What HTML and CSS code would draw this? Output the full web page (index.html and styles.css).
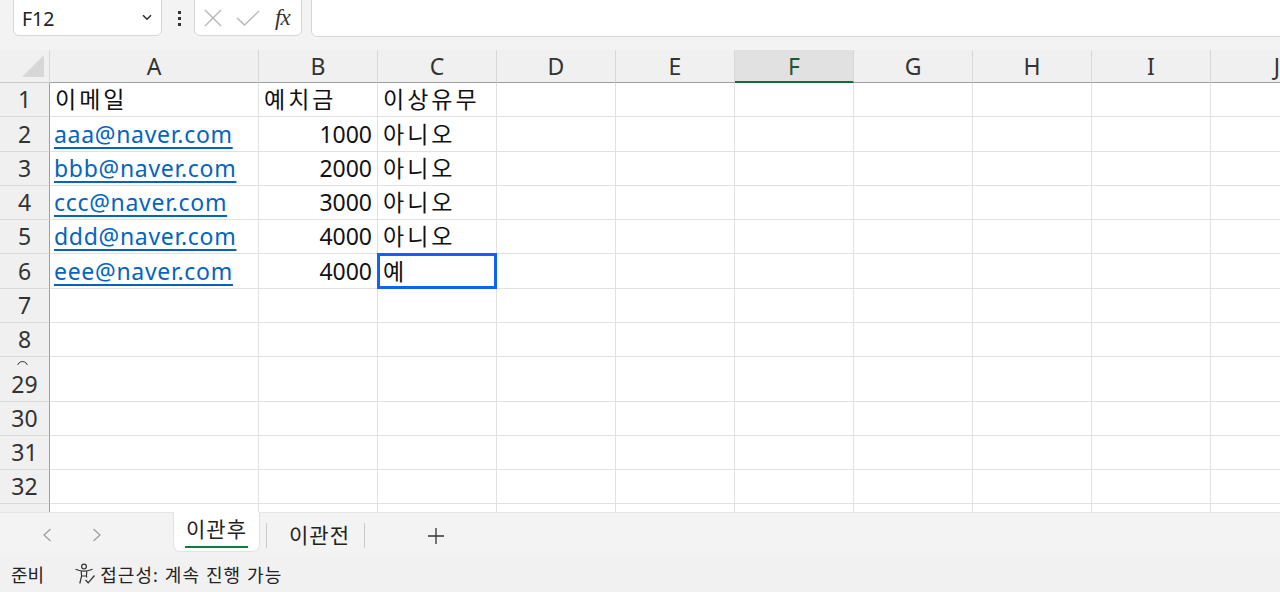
FILE: index.html
```html
<!DOCTYPE html>
<html>
	<head>
		<title>통합 문서 - 이관후</title>
		<meta charset="utf-8">
		<link rel="stylesheet" href="styles.css">
	</head>
	<body>
	<div class="app">

		<div class="toolbar">
			<div class="namebox">
				<span class="name">F12</span>
				<svg class="chev" width="10" height="7" viewBox="0 0 10 7"><path d="M1 1.2 L5 5.2 L9 1.2" fill="none" stroke="#333" stroke-width="1.6"/></svg>
			</div>
			<div class="dots"><i></i><i></i><i></i></div>
			<div class="fxgroup">
				<svg width="18" height="18" viewBox="0 0 18 18"><path d="M1 1 L17 17 M17 1 L1 17" stroke="#b4b4b4" stroke-width="1.3" fill="none"/></svg>
				<svg class="ok" width="24" height="16" viewBox="0 0 24 16"><path d="M1 8 L8.5 15 L23 1" stroke="#b4b4b4" stroke-width="1.3" fill="none"/></svg>
				<span class="fx">fx</span>
			</div>
			<div class="formula"></div>
		</div>

		<div class="sheet">
			<div class="row head">
				<div class="corner"><span class="tri"></span></div>
				<div class="ch wa">A</div><div class="ch">B</div><div class="ch">C</div><div class="ch">D</div><div class="ch">E</div>
				<div class="ch active">F</div><div class="ch">G</div><div class="ch">H</div><div class="ch">I</div><div class="ch right">J</div>
			</div>

			<div class="row">
				<div class="rh">1</div>
				<div class="c wa ko">이메일</div><div class="c ko">예치금</div><div class="c ko">이상유무</div>
				<div class="c"></div><div class="c"></div><div class="c"></div><div class="c"></div><div class="c"></div><div class="c"></div><div class="c"></div>
			</div>
			<div class="row">
				<div class="rh">2</div>
				<div class="c wa"><a class="link">aaa@naver.com</a></div><div class="c num">1000</div><div class="c ko">아니오</div>
				<div class="c"></div><div class="c"></div><div class="c"></div><div class="c"></div><div class="c"></div><div class="c"></div><div class="c"></div>
			</div>
			<div class="row">
				<div class="rh">3</div>
				<div class="c wa"><a class="link">bbb@naver.com</a></div><div class="c num">2000</div><div class="c ko">아니오</div>
				<div class="c"></div><div class="c"></div><div class="c"></div><div class="c"></div><div class="c"></div><div class="c"></div><div class="c"></div>
			</div>
			<div class="row">
				<div class="rh">4</div>
				<div class="c wa"><a class="link">ccc@naver.com</a></div><div class="c num">3000</div><div class="c ko">아니오</div>
				<div class="c"></div><div class="c"></div><div class="c"></div><div class="c"></div><div class="c"></div><div class="c"></div><div class="c"></div>
			</div>
			<div class="row">
				<div class="rh">5</div>
				<div class="c wa"><a class="link">ddd@naver.com</a></div><div class="c num">4000</div><div class="c ko">아니오</div>
				<div class="c"></div><div class="c"></div><div class="c"></div><div class="c"></div><div class="c"></div><div class="c"></div><div class="c"></div>
			</div>
			<div class="row">
				<div class="rh">6</div>
				<div class="c wa"><a class="link">eee@naver.com</a></div><div class="c num">4000</div><div class="c ko sel">예</div>
				<div class="c"></div><div class="c"></div><div class="c"></div><div class="c"></div><div class="c"></div><div class="c"></div><div class="c"></div>
			</div>
			<div class="row">
				<div class="rh">7</div>
				<div class="c wa"></div><div class="c"></div><div class="c"></div>
				<div class="c"></div><div class="c"></div><div class="c"></div><div class="c"></div><div class="c"></div><div class="c"></div><div class="c"></div>
			</div>
			<div class="row">
				<div class="rh">8</div>
				<div class="c wa"></div><div class="c"></div><div class="c"></div>
				<div class="c"></div><div class="c"></div><div class="c"></div><div class="c"></div><div class="c"></div><div class="c"></div><div class="c"></div>
			</div>
			<div class="row tall">
				<div class="rh stack"><span class="peek"><i></i></span><span>29</span></div>
				<div class="c wa"></div><div class="c"></div><div class="c"></div>
				<div class="c"></div><div class="c"></div><div class="c"></div><div class="c"></div><div class="c"></div><div class="c"></div><div class="c"></div>
			</div>
			<div class="row">
				<div class="rh">30</div>
				<div class="c wa"></div><div class="c"></div><div class="c"></div>
				<div class="c"></div><div class="c"></div><div class="c"></div><div class="c"></div><div class="c"></div><div class="c"></div><div class="c"></div>
			</div>
			<div class="row">
				<div class="rh">31</div>
				<div class="c wa"></div><div class="c"></div><div class="c"></div>
				<div class="c"></div><div class="c"></div><div class="c"></div><div class="c"></div><div class="c"></div><div class="c"></div><div class="c"></div>
			</div>
			<div class="row">
				<div class="rh">32</div>
				<div class="c wa"></div><div class="c"></div><div class="c"></div>
				<div class="c"></div><div class="c"></div><div class="c"></div><div class="c"></div><div class="c"></div><div class="c"></div><div class="c"></div>
			</div>
			<div class="row">
				<div class="rh"></div>
				<div class="c wa"></div><div class="c"></div><div class="c"></div>
				<div class="c"></div><div class="c"></div><div class="c"></div><div class="c"></div><div class="c"></div><div class="c"></div><div class="c"></div>
			</div>
		</div>

		<div class="tabs">
			<svg class="nav" width="10" height="14" viewBox="0 0 10 14"><path d="M8.5 1 L2 7 L8.5 13" fill="none" stroke="#9c9c9c" stroke-width="1.2"/></svg>
			<svg class="nav next" width="10" height="14" viewBox="0 0 10 14"><path d="M1.5 1 L8 7 L1.5 13" fill="none" stroke="#9c9c9c" stroke-width="1.2"/></svg>
			<div class="tab current"><span>이관후</span><i class="bar"></i></div>
			<span class="sep first"></span>
			<div class="tab">이관전</div>
			<span class="sep last"></span>
			<svg class="add" width="18" height="18" viewBox="0 0 18 18"><path d="M9 1 V17 M1 9 H17" stroke="#333" stroke-width="1.3" fill="none"/></svg>
		</div>

		<div class="status">
			<span class="ready">준비</span>
			<svg class="a11y" width="24" height="22" viewBox="0 0 24 22">
				<circle cx="10" cy="3.6" r="2.4" fill="none" stroke="#333" stroke-width="1.2"/>
				<path d="M1.5 6.2 C5 7.6 7 8.2 10 8.2 C13 8.2 15 7.6 18.5 6.2 M7.2 8.3 L7.6 13 L5.8 20.5 M12.8 8.3 L12.4 13 L12.8 14.5 M7.6 13 H12.4" fill="none" stroke="#333" stroke-width="1.2"/>
				<path d="M11.5 17 L14.2 19.8 L20.5 12.5" fill="none" stroke="#333" stroke-width="1.3"/>
			</svg>
			<span class="check">접근성: 계속 진행 가능</span>
		</div>

	</div>
	</body>
</html>
```

FILE: styles.css
```css
* {
	box-sizing: border-box;
}

body {
	margin: 0;
	background-color: #f3f3f3;
	font-family: "Noto Sans", "Noto Sans CJK KR", sans-serif;
	color: #222;
}

.app {
	width: 1280px;
	height: 592px;
	display: flex;
	flex-direction: column;
	overflow: hidden;
}

/* formula bar */
.toolbar {
	height: 50px;
	flex-shrink: 0;
	display: flex;
	align-items: flex-start;
	padding-left: 13px;
}

.namebox {
	width: 149px;
	height: 38px;
	margin-top: -2px;
	padding: 4px 9px 0 8px;
	background-color: #fff;
	border: 1px solid #d6d6d6;
	border-radius: 0 0 6px 6px;
	display: flex;
	align-items: center;
	justify-content: space-between;
}

.name {
	font-size: 19.5px;
	line-height: 24px;
	color: #222;
}

.chev {
	margin-top: -4px;
}

.dots {
	width: 3px;
	margin: 11px 0 0 16px;
	display: flex;
	flex-direction: column;
	gap: 3px;
}

.dots i {
	width: 3px;
	height: 3px;
	background-color: #333;
}

.fxgroup {
	width: 108px;
	height: 38px;
	margin: -2px 0 0 13px;
	padding: 2px 0 0 9px;
	background-color: #fff;
	border: 1px solid #d6d6d6;
	border-radius: 0 0 6px 6px;
	display: flex;
	align-items: center;
}

.fxgroup .ok {
	margin-left: 14px;
}

.fx {
	margin-left: 15px;
	font-family: "Liberation Serif", serif;
	font-style: italic;
	font-size: 23px;
	line-height: 24px;
	color: #333;
	letter-spacing: -1px;
}

.formula {
	flex: 1;
	height: 39px;
	margin: -2px -10px 0 9px;
	background-color: #fff;
	border: 1px solid #d6d6d6;
	border-radius: 0 0 6px 6px;
}

/* grid */
.sheet {
	flex: 0 0 462px;
	overflow: hidden;
	background-color: #fff;
	font-size: 23px;
	line-height: 23px;
}

.row {
	display: flex;
	height: 34.25px;
}

.row.tall {
	height: 44.5px;
}

.row.head {
	height: 33px;
	background-color: #f0f0f0;
}

.corner {
	width: 50px;
	flex-shrink: 0;
	border-right: 1px solid #d8d8d8;
	border-bottom: 1px solid #c8c8c8;
	display: flex;
	align-items: flex-end;
	justify-content: flex-end;
	padding: 0 5px 5px 0;
}

.tri {
	width: 0;
	height: 0;
	border-left: 22px solid transparent;
	border-bottom: 22px solid #d7d7d7;
}

.ch {
	width: 119px;
	flex-shrink: 0;
	border-right: 1px solid #d8d8d8;
	border-bottom: 1px solid #9f9f9f;
	display: flex;
	align-items: center;
	justify-content: center;
	color: #333;
}

.ch.active {
	background-color: #e1e1e1;
	border-bottom: 2px solid #136c3a;
	color: #185c37;
	padding-top: 1px;
}

.ch.right {
	justify-content: flex-end;
	padding-right: 49px;
}

.rh {
	width: 50px;
	flex-shrink: 0;
	background-color: #f0f0f0;
	border-right: 1px solid #9f9f9f;
	border-bottom: 1px solid #d9d9d9;
	display: flex;
	align-items: flex-end;
	justify-content: center;
	padding-bottom: 5px;
	color: #333;
}

.rh.stack {
	flex-direction: column;
	align-items: center;
	justify-content: flex-end;
}

/* top of the hidden row 9 label peeking out */
.peek {
	width: 12px;
	height: 4px;
	overflow: hidden;
	margin: 0 4px 8px 0;
}

.peek i {
	display: block;
	width: 11px;
	height: 11px;
	border: 1.6px solid #333;
	border-radius: 50%;
}

.c {
	width: 119px;
	flex-shrink: 0;
	border-right: 1px solid #e1e1e1;
	border-bottom: 1px solid #e1e1e1;
	display: flex;
	align-items: flex-end;
	padding: 0 5px 5px 4px;
	white-space: nowrap;
	color: #111;
}

.c.wa, .ch.wa {
	width: 209px;
}

.c.ko {
	letter-spacing: 3px;
	padding-left: 5px;
}

.c.num {
	justify-content: flex-end;
}

.c.sel {
	position: relative;
}

.c.sel::after {
	content: "";
	position: absolute;
	top: -1px;
	left: -1px;
	right: -1px;
	bottom: -1px;
	border: 3px solid #0f63f5;
}

.link {
	color: #0563c1;
	letter-spacing: 0.7px;
	text-decoration: underline;
	text-decoration-thickness: 1.5px;
	text-underline-offset: 4px;
}

/* sheet tabs */
.tabs {
	flex: 0 0 44px;
	display: flex;
	align-items: flex-start;
	padding-left: 42px;
	background-color: #f3f3f3;
	border-top: 1px solid #e6e6e6;
}

.nav {
	margin-top: 15px;
	flex-shrink: 0;
}

.nav.next {
	margin-left: 40px;
}

.tab {
	font-size: 21px;
	line-height: 26px;
	letter-spacing: 1px;
	color: #222;
	padding-top: 9px;
}

.tab.current {
	width: 87px;
	height: 40px;
	margin: -1px 0 0 71px;
	padding-top: 4px;
	background-color: #fff;
	border: 1px solid #e2e2e2;
	border-top: none;
	border-radius: 0 0 7px 7px;
	display: flex;
	flex-direction: column;
	align-items: center;
}

.bar {
	width: 63px;
	height: 2px;
	margin-top: 4px;
	background-color: #117a3e;
}

.sep {
	width: 1px;
	height: 25px;
	margin-top: 10px;
	background-color: #cacaca;
}

.sep.first {
	margin-left: 6px;
	margin-right: 22px;
}

.sep.last {
	margin-left: 14px;
}

.add {
	margin: 14px 0 0 62px;
}

/* status bar */
.status {
	flex: 0 0 36px;
	display: flex;
	align-items: center;
	padding-left: 11px;
	font-size: 18px;
	color: #222;
	background-color: #f1f1f1;
}

.ready {
	margin-right: 30px;
}

.a11y {
	margin-right: 2px;
}

.check {
	letter-spacing: 1.1px;
}
```
